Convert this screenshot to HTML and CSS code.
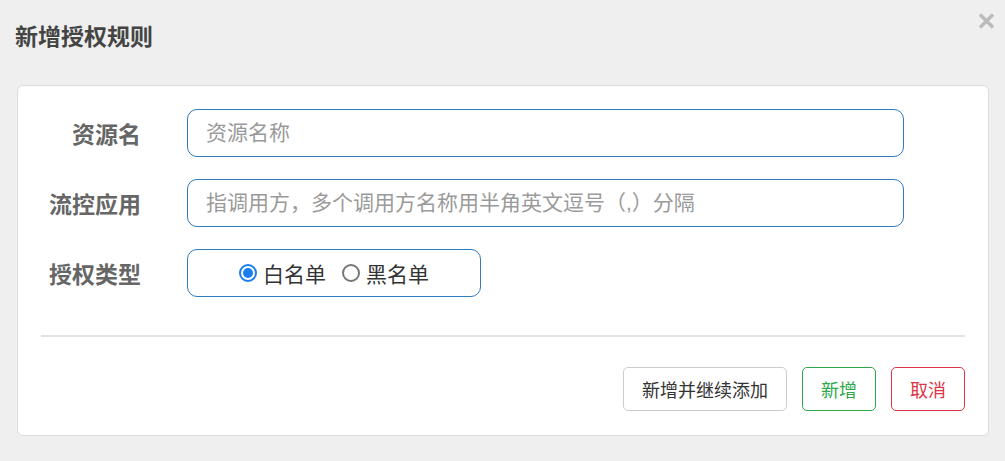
FILE: index.html
```html
<!DOCTYPE html>
<html lang="zh-CN">
<head>
  <meta charset="UTF-8">
  <title>新增授权规则</title>
  <link rel="stylesheet" href="styles.css">
</head>
<body>
  <div class="dialog">
    <div class="dialog-header">
      <h3 class="dialog-title">新增授权规则</h3>
      <span class="close">
        <svg width="17" height="16" viewBox="0 0 17 16">
          <path d="M2 1.5 L15 14.5 M15 1.5 L2 14.5" stroke="#bbb" stroke-width="3.4" fill="none"/>
        </svg>
      </span>
    </div>
    <div class="card">
      <form class="form">
        <div class="form-row">
          <label class="form-label">资源名</label>
          <input class="form-input" type="text" placeholder="资源名称">
        </div>
        <div class="form-row">
          <label class="form-label">流控应用</label>
          <input class="form-input" type="text" placeholder="指调用方，多个调用方名称用半角英文逗号（,）分隔">
        </div>
        <div class="form-row">
          <label class="form-label">授权类型</label>
          <div class="radio-box">
            <label class="radio"><span class="dot checked"></span>白名单</label>
            <label class="radio"><span class="dot"></span>黑名单</label>
          </div>
        </div>
      </form>
      <div class="divider"></div>
      <div class="actions">
        <button class="btn btn-default">新增并继续添加</button>
        <button class="btn btn-success">新增</button>
        <button class="btn btn-danger">取消</button>
      </div>
    </div>
  </div>
</body>
</html>
```

FILE: styles.css
```css
body {
  margin: 0;
  background: #efefef;
  font-family: "Liberation Sans", "Noto Sans CJK SC", sans-serif;
  color: #333;
}
.dialog {
  padding: 0 16px 25px 17px;
}
.dialog-header {
  display: flex;
  justify-content: space-between;
  align-items: flex-start;
  height: 85px;
}
.dialog-title {
  margin: 22px 0 0 -2px;
  font-size: 23px;
  line-height: 30px;
  font-weight: bold;
  color: #444;
}
.close {
  margin: 13px -6px 0 0;
  line-height: 0;
  cursor: pointer;
}
.card {
  background: #fff;
  border: 1px solid #ddd;
  border-radius: 6px;
  padding: 23px 23px 24px;
}
.form {
  display: flex;
  flex-direction: column;
  gap: 22px;
}
.form-row {
  display: flex;
  align-items: center;
  gap: 46px;
}
.form-label {
  width: 100px;
  text-align: right;
  font-size: 23px;
  font-weight: bold;
  color: #666;
}
.form-input {
  width: 717px;
  height: 48px;
  box-sizing: border-box;
  border: 1px solid #2f7bc0;
  border-radius: 10px;
  padding: 0 18px;
  font-family: inherit;
  font-size: 21px;
  color: #333;
  outline: none;
}
.form-input::placeholder {
  color: #9a9a9a;
}
.radio-box {
  width: 294px;
  height: 48px;
  box-sizing: border-box;
  border: 1px solid #2f7bc0;
  border-radius: 10px;
  display: flex;
  align-items: center;
  justify-content: center;
  gap: 16px;
}
.radio {
  display: flex;
  align-items: center;
  gap: 6px;
  font-size: 21px;
  color: #333;
}
.dot {
  width: 14px;
  height: 14px;
  border: 2px solid #777;
  border-radius: 50%;
  box-sizing: content-box;
}
.dot.checked {
  width: 10px;
  height: 10px;
  border: 2px solid #1a7df0;
  background: #1a7df0;
  padding: 2px;
  background-clip: content-box;
}
.divider {
  height: 2px;
  background: #e3e3e3;
  margin: 38px 0 30px;
}
.actions {
  display: flex;
  justify-content: flex-end;
  gap: 15px;
}
.btn {
  height: 44px;
  padding: 0 18px;
  background: #fff;
  border: 1px solid #ccc;
  border-radius: 5px;
  font-family: inherit;
  font-size: 18px;
  cursor: pointer;
}
.btn-default {
  color: #333;
}
.btn-success {
  border-color: #2ea84a;
  color: #2ea84a;
}
.btn-danger {
  border-color: #dc3545;
  color: #dc3545;
}
```
